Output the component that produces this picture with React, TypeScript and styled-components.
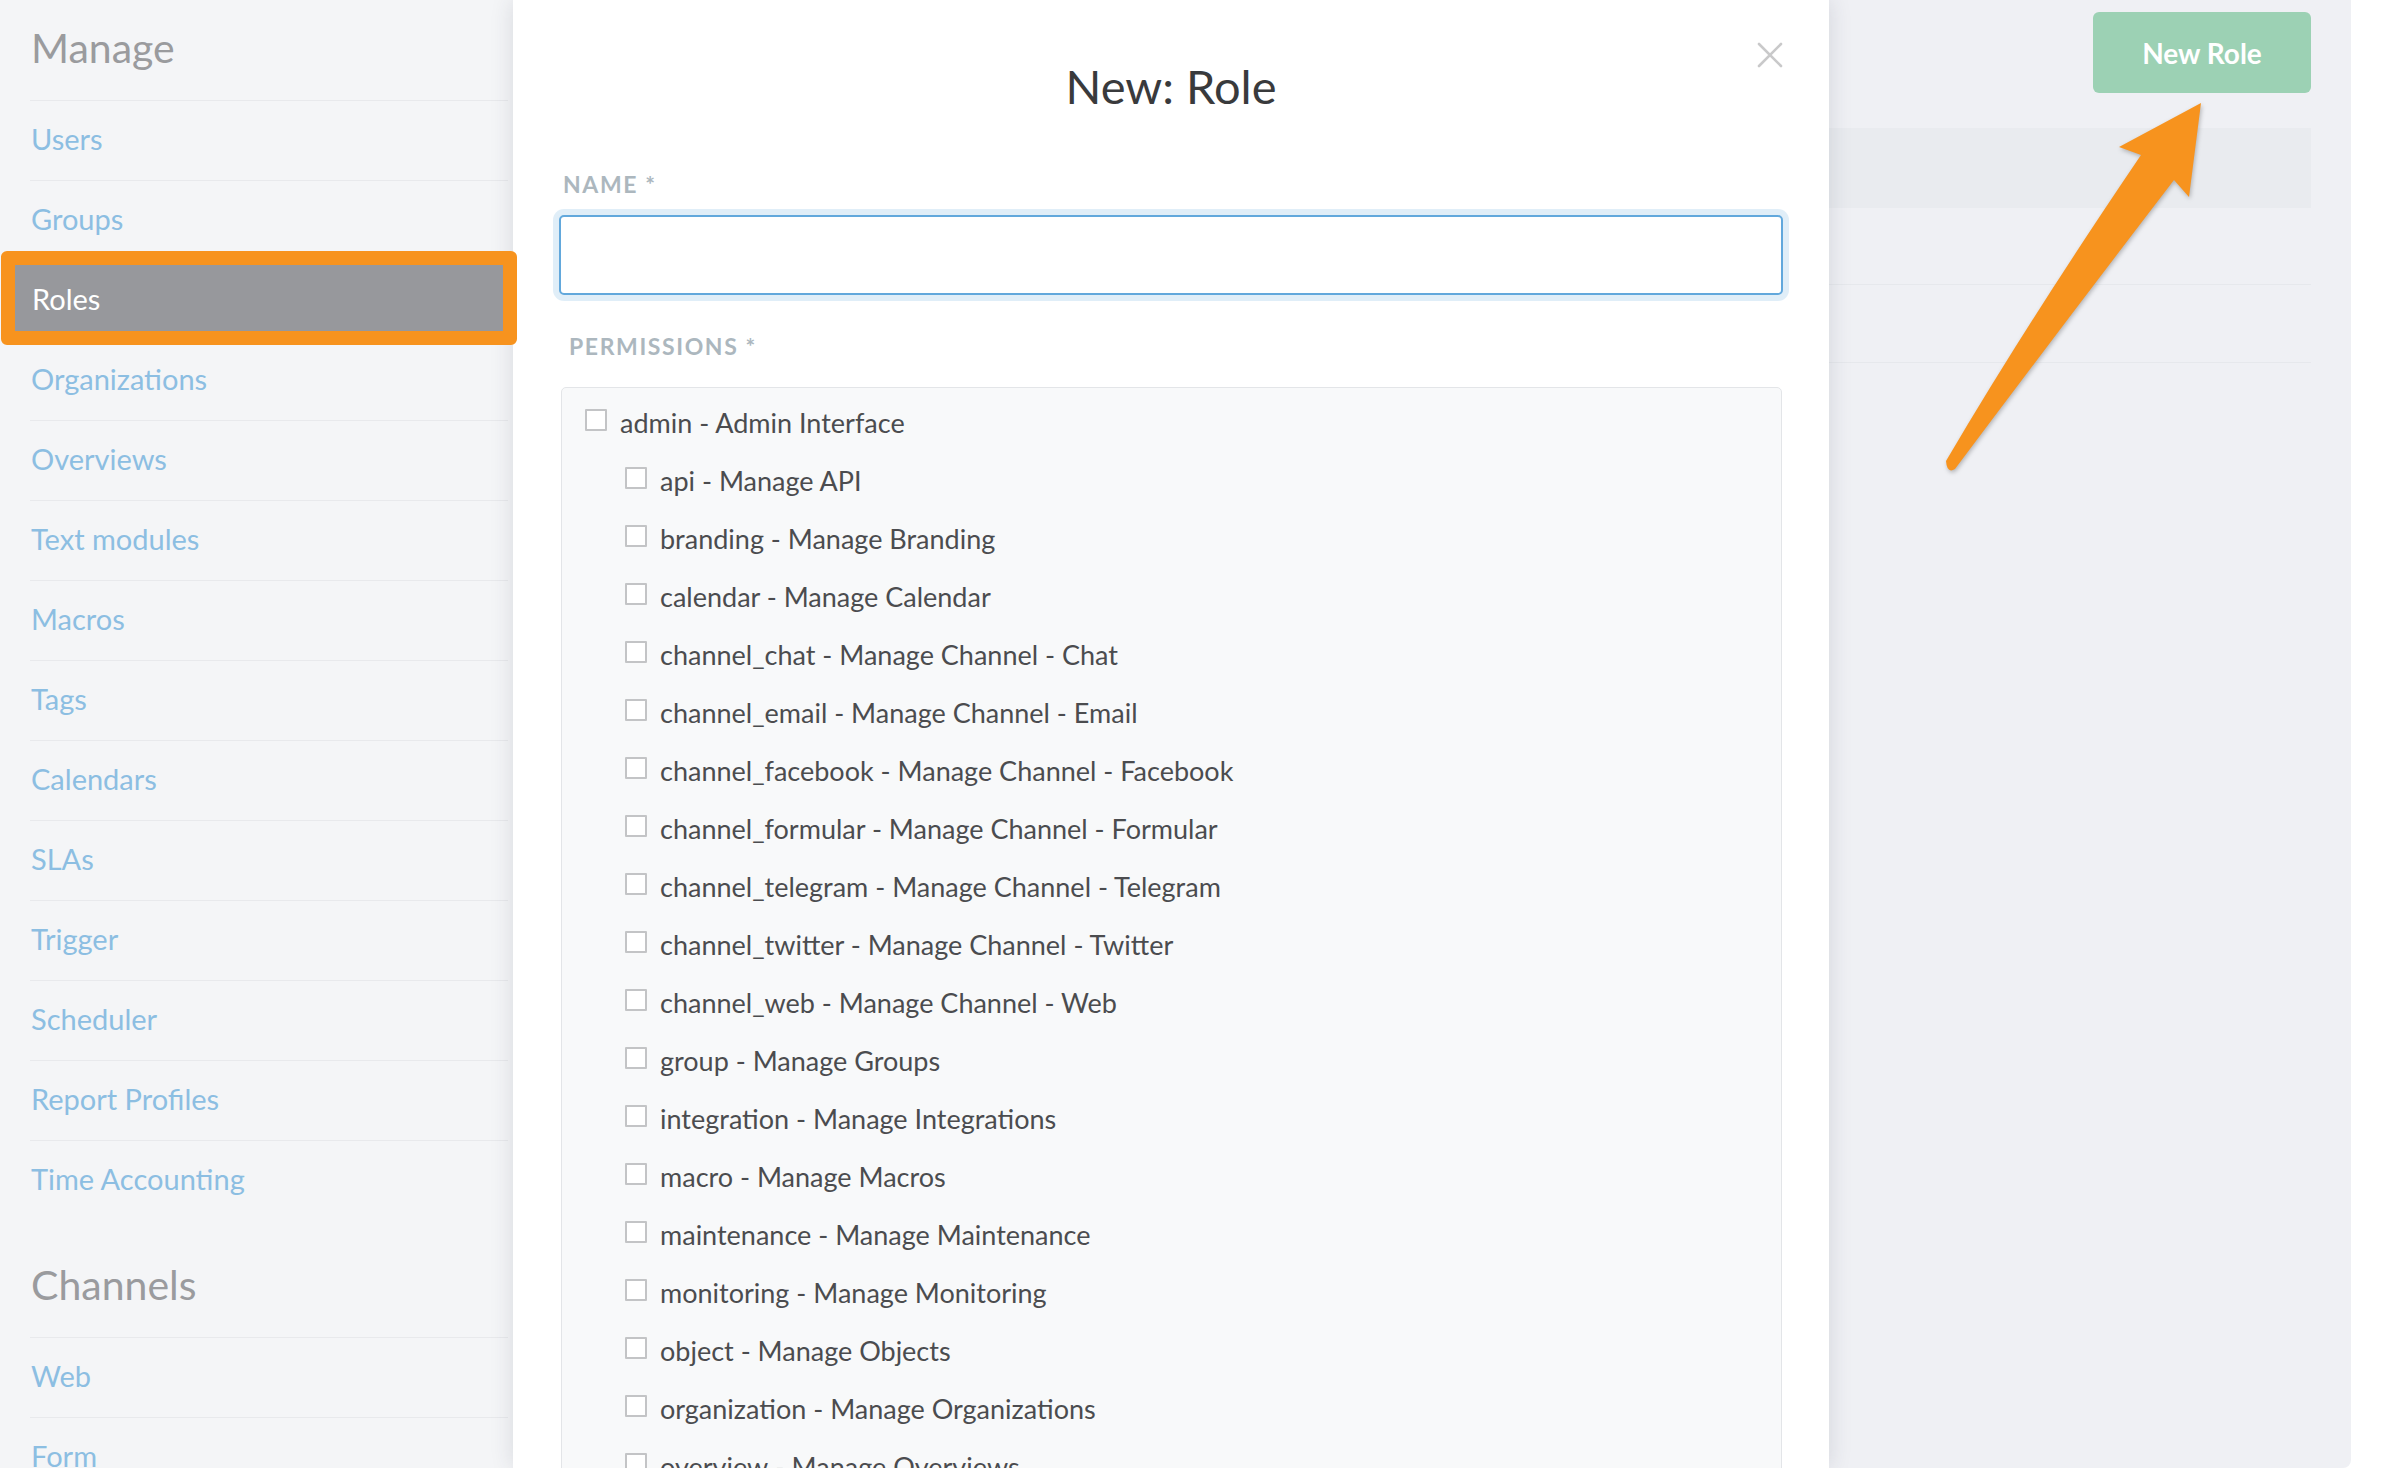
import React from 'react';
import styled, { createGlobalStyle } from 'styled-components';

const GlobalStyle = createGlobalStyle`
  html, body { margin: 0; padding: 0; background: #ffffff; }
  body { font-family: Lato, "Open Sans", "Noto Sans", sans-serif; overflow: hidden; }
  *, *::before, *::after { box-sizing: border-box; }
`;

const Page = styled.div`
  display: flex;
  width: 2392px;
  height: 1468px;
  overflow: hidden;
  background: #ffffff;
`;

const Sidebar = styled.nav`
  width: 513px;
  flex: none;
  background: #f4f5f7;
  padding: 0 5px 0 30px;
`;

const SectionTitle = styled.div<{ $gap?: number }>`
  font-size: 41px;
  line-height: 40px;
  color: #9a9b9e;
  padding: 28px 0 32px 1px;
  margin-top: ${(p) => p.$gap ?? 0}px;
`;

const NavItem = styled.div`
  position: relative;
  height: 80px;
  border-top: 1px solid #e8e9ec;
  padding: 24px 0 0 1px;
  font-size: 29px;
  line-height: 28px;
  color: #8cbee2;
`;

const ActiveFrame = styled.div`
  position: absolute;
  z-index: 5;
  top: -10px;
  left: -29px;
  right: -9px;
  height: 94px;
  border: 14px solid #f7931e;
  border-radius: 6px;
  background: #97989c;
  color: #ffffff;
  padding: 20px 0 0 17px;
`;

const Modal = styled.section`
  position: relative;
  z-index: 2;
  width: 1316px;
  flex: none;
  background: #ffffff;
  box-shadow: 0 0 22px rgba(40, 50, 70, 0.14);
  padding: 42px 46px 0;
`;

const ModalHeader = styled.header`
  display: grid;
  grid-template-columns: 1fr auto 1fr;
  align-items: start;
`;

const Title = styled.h1`
  grid-column: 2;
  margin: 22px 0 0;
  font-size: 47px;
  line-height: 45px;
  font-weight: 400;
  color: #393a3c;
`;

const CloseButton = styled.button`
  grid-column: 3;
  justify-self: end;
  width: 26px;
  height: 26px;
  padding: 0;
  border: 0;
  background: transparent;
  display: flex;
`;

const FieldLabel = styled.div<{ $top: number; $indent: number }>`
  margin-top: ${(p) => p.$top}px;
  padding-left: ${(p) => p.$indent}px;
  font-size: 23px;
  line-height: 22px;
  font-weight: 700;
  letter-spacing: 1.6px;
  text-transform: uppercase;
  color: #acb7be;
`;

const TextInput = styled.input`
  display: block;
  width: 100%;
  height: 80px;
  margin-top: 20px;
  border: 2px solid #62a8dc;
  border-radius: 5px;
  box-shadow: 0 0 0 6px rgba(98, 168, 220, 0.2);
  background: #ffffff;
  outline: none;
  font-family: inherit;
  font-size: 27px;
`;

const PermissionBox = styled.div`
  margin: 30px 1px 0 2px;
  height: 1200px;
  border: 1px solid #e3e5e8;
  border-radius: 5px;
  background: #f8f9fa;
  padding: 5px 0 0 23px;
`;

const PermRow = styled.label<{ $level: number }>`
  display: flex;
  align-items: center;
  gap: 13px;
  height: 58px;
  padding-left: ${(p) => p.$level * 40}px;
  font-size: 27px;
  color: #4b4c4f;
`;

const Check = styled.span`
  width: 22px;
  height: 22px;
  flex: none;
  border: 2px solid #c3c4c6;
  border-radius: 1px;
  background: #ffffff;
  margin-top: -4px;
`;

const RightPanel = styled.section`
  position: relative;
  width: 522px;
  flex: none;
  height: 1468px;
  background: #eff0f4;
  border-bottom-right-radius: 8px;
  padding: 12px 40px 0 0;
`;

const Toolbar = styled.div`
  display: flex;
  justify-content: flex-end;
`;

const PrimaryButton = styled.button`
  width: 218px;
  height: 81px;
  border: 0;
  border-radius: 6px;
  background: #9cd1b4;
  color: #ffffff;
  font-family: inherit;
  font-size: 28px;
  font-weight: 700;
`;

const Table = styled.div`
  margin-top: 35px;
`;

const TableRow = styled.div<{ $head?: boolean; $h: number }>`
  height: ${(p) => p.$h}px;
  background: ${(p) => (p.$head ? '#e9ebef' : 'transparent')};
  border-bottom: ${(p) => (p.$head ? '0' : '1px solid #e6e8ec')};
`;

const Spacer = styled.div`
  flex: 1;
  background: #ffffff;
`;

const ArrowLayer = styled.svg`
  position: absolute;
  left: 0;
  top: 0;
  pointer-events: none;
  overflow: visible;
  filter: drop-shadow(1px 2px 2px rgba(0, 0, 0, 0.25));
`;

const navItems = [
  'Users', 'Groups', 'Roles', 'Organizations', 'Overviews', 'Text modules', 'Macros',
  'Tags', 'Calendars', 'SLAs', 'Trigger', 'Scheduler', 'Report Profiles', 'Time Accounting',
];

const permissions: [string, string, number][] = [
  ['admin', 'Admin Interface', 0],
  ['api', 'Manage API', 1],
  ['branding', 'Manage Branding', 1],
  ['calendar', 'Manage Calendar', 1],
  ['channel_chat', 'Manage Channel - Chat', 1],
  ['channel_email', 'Manage Channel - Email', 1],
  ['channel_facebook', 'Manage Channel - Facebook', 1],
  ['channel_formular', 'Manage Channel - Formular', 1],
  ['channel_telegram', 'Manage Channel - Telegram', 1],
  ['channel_twitter', 'Manage Channel - Twitter', 1],
  ['channel_web', 'Manage Channel - Web', 1],
  ['group', 'Manage Groups', 1],
  ['integration', 'Manage Integrations', 1],
  ['macro', 'Manage Macros', 1],
  ['maintenance', 'Manage Maintenance', 1],
  ['monitoring', 'Manage Monitoring', 1],
  ['object', 'Manage Objects', 1],
  ['organization', 'Manage Organizations', 1],
  ['overview', 'Manage Overviews', 1],
  ['package', 'Manage Packages', 1],
];

export default function App() {
  return (
    <>
      <GlobalStyle />
      <Page>
        <Sidebar>
          <SectionTitle>Manage</SectionTitle>
          {navItems.map((item) =>
            item === 'Roles' ? (
              <NavItem key={item}>
                <ActiveFrame>{item}</ActiveFrame>
              </NavItem>
            ) : (
              <NavItem key={item}>{item}</NavItem>
            )
          )}
          <SectionTitle $gap={17}>Channels</SectionTitle>
          <NavItem>Web</NavItem>
          <NavItem>Form</NavItem>
        </Sidebar>

        <Modal>
          <ModalHeader>
            <Title>New: Role</Title>
            <CloseButton aria-label="close">
              <svg width="26" height="26" viewBox="0 0 26 26">
                <path d="M2 2 L24 24 M24 2 L2 24" stroke="#c9c9ca" strokeWidth="2.6" strokeLinecap="round" />
              </svg>
            </CloseButton>
          </ModalHeader>
          <FieldLabel $top={64} $indent={4}>Name *</FieldLabel>
          <TextInput />
          <FieldLabel $top={40} $indent={10}>Permissions *</FieldLabel>
          <PermissionBox>
            {permissions.map(([key, label, level]) => (
              <PermRow key={key} $level={level}>
                <Check />
                <span>{`${key} - ${label}`}</span>
              </PermRow>
            ))}
          </PermissionBox>
        </Modal>

        <RightPanel>
          <Toolbar>
            <PrimaryButton>New Role</PrimaryButton>
          </Toolbar>
          <Table>
            <TableRow $head $h={80} />
            <TableRow $h={77} />
            <TableRow $h={78} />
          </Table>
          <ArrowLayer width="522" height="500" viewBox="0 0 522 500">
            <path
              d="M117 461 Q 200 320 312 155 L 290 147 L 372 103 L 360 197 L 345 180 Q 230 330 126 469 Q 118 474 117 461 Z"
              fill="#f7931e"
            />
          </ArrowLayer>
        </RightPanel>
        <Spacer />
      </Page>
    </>
  );
}
